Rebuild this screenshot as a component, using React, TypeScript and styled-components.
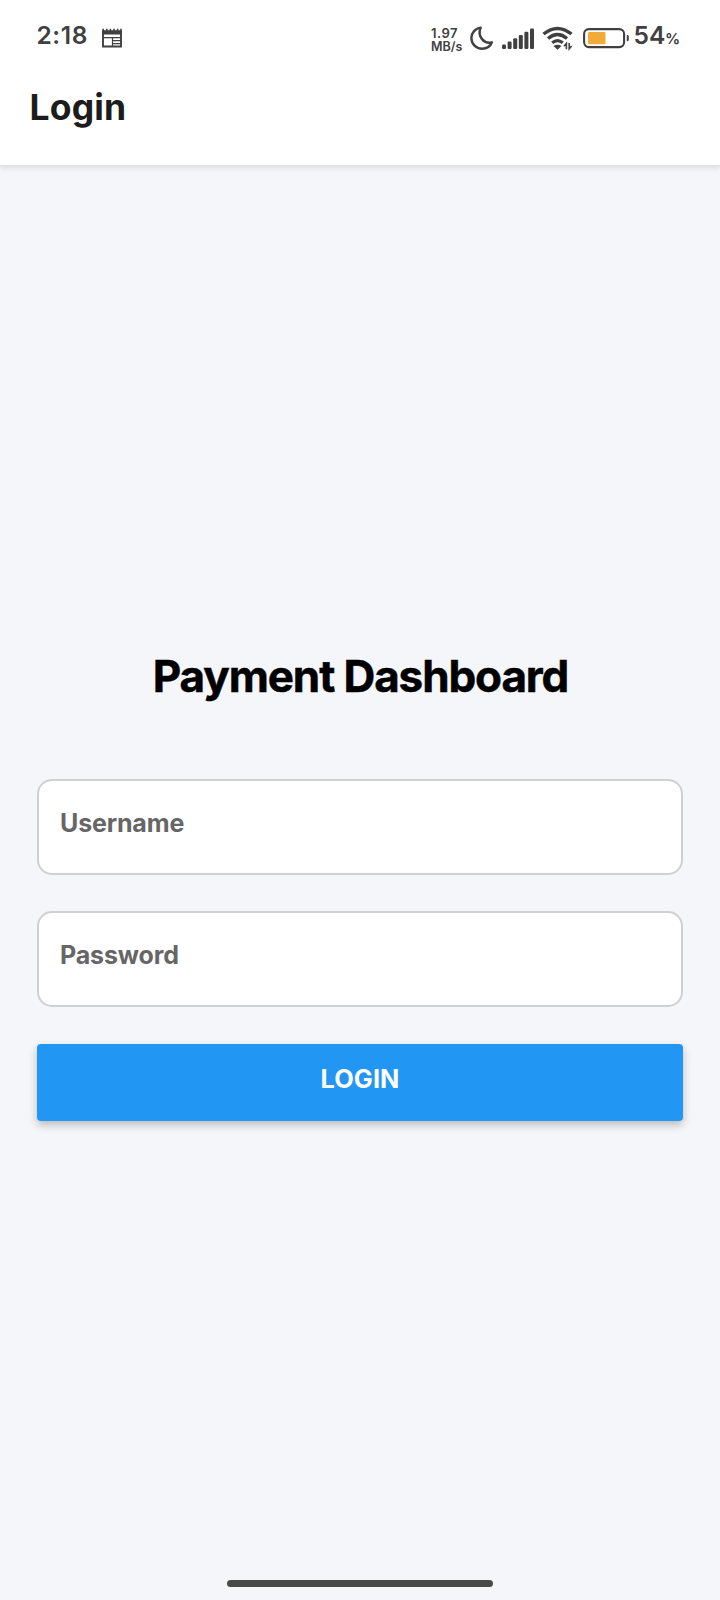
import React from "react";
import styled, { createGlobalStyle } from "styled-components";

const GlobalStyle = createGlobalStyle`
  *, *::before, *::after { box-sizing: border-box; }
  body { margin: 0; background: #f4f6fa; font-family: Inter, "Liberation Sans", sans-serif; }
`;

const Screen = styled.div`
  display: flex;
  flex-direction: column;
  width: 720px;
  height: 1600px;
  background: #f4f6fa;
`;

const Header = styled.header`
  height: 165px;
  background: #fff;
  box-shadow: 0 2px 0 #e2e3e4, 0 4px 4px rgba(0, 0, 0, 0.08);
`;

const StatusBar = styled.div`
  display: flex;
  justify-content: space-between;
  height: 72px;
  padding: 20px 40px 0 36.5px;
  color: #404040;
`;

const StatusGroup = styled.div`
  display: flex;
  align-items: flex-start;
`;

const StatusText = styled.span`
  font-size: 24.5px;
  line-height: 31px;
  font-weight: 600;
`;

const Time = styled(StatusText)`
  width: 65.5px;
  letter-spacing: 0.6px;
`;

const Speed = styled.div`
  display: flex;
  flex-direction: column;
  width: 37.5px;
  padding-top: 7px;
  font-size: 12.5px;
  line-height: 13px;
  font-weight: 600;
`;

const Rate = styled.span`
  font-size: 13px;
  letter-spacing: 0.5px;
`;

const Glyph = styled.svg<{ $gap?: number }>`
  display: block;
  flex: none;
  margin-right: ${({ $gap = 0 }) => $gap}px;
`;

const Percent = styled.span`
  font-size: 14.5px;
  line-height: 37px;
  font-weight: 700;
`;

const Title = styled.h1`
  margin: 0;
  padding: 14px 29.5px 0;
  font-size: 35.5px;
  line-height: 44px;
  font-weight: 700;
  letter-spacing: 0.15px;
  color: #1c1c1c;
`;

const Main = styled.main`
  flex: 1;
  display: flex;
  flex-direction: column;
  padding: 484px 37px 0;
`;

const Heading = styled.h2`
  margin: 0 0 76px;
  padding-left: 1px;
  font-size: 44px;
  line-height: 54px;
  font-weight: 700;
  letter-spacing: -1.1px;
  -webkit-text-stroke: 0.5px #000;
  text-align: center;
  color: #000;
`;

const Field = styled.input`
  width: 100%;
  height: 96px;
  margin: 0 0 36px;
  padding: 0 21px 9px;
  border: 2px solid #ced0d2;
  border-radius: 15px;
  background: #fff;
  font-family: inherit;
  font-size: 25px;
  font-weight: 700;
  letter-spacing: -0.15px;
  color: #222;
  outline: none;
  &::placeholder { color: #666; opacity: 1; }
`;

const Submit = styled.button`
  width: 100%;
  height: 77px;
  margin-top: 1px;
  padding: 0 0 9px;
  border: 0;
  border-radius: 4px;
  background: #2196f3;
  box-shadow: 0 4px 8px rgba(0, 0, 0, 0.24);
  color: #fff;
  font-family: inherit;
  font-size: 25.3px;
  font-weight: 700;
  letter-spacing: 0.1px;
`;

const HomeIndicator = styled.div`
  align-self: center;
  width: 266px;
  height: 7px;
  margin-bottom: 13px;
  border-radius: 4px;
  background: #484a49;
`;

const CalendarIcon = () => (
  <Glyph width="22" height="30" viewBox="0 0 22 30" fill="none" stroke="#404040">
    <path d="M1 11.5h18v15H1z" strokeWidth="1.9" />
    <path d="M.2 10.5h19.6v4H.2z" fill="#404040" stroke="none" />
    <path d="M1.2 8.8v3M4.8 8.8v3M8.4 8.8v3M12 8.8v3M15.6 8.8v3M19 8.8v3" strokeWidth="1.6" />
    <path d="M10.5 17.7v9M1 17.7H19M10.5 20.7H19M10.5 23.7H19" strokeWidth="1.2" />
  </Glyph>
);

const MoonIcon = () => (
  <Glyph width="26" height="32" viewBox="-1 0 26 32" $gap={7} fill="none" stroke="#404040">
    <path
      d="M10.7 7.6C5.3 8.4 1.4 12.7 1.4 18c0 6 4.8 10.7 10.7 10.7 4.5 0 8.3-2.5 9.8-6.4C14.3 24.4 6.9 16.6 10.7 7.6Z"
      strokeWidth="2.4"
      strokeLinejoin="round"
    />
  </Glyph>
);

const SignalIcon = () => (
  <Glyph width="32" height="32" viewBox="0 0 32 32" $gap={8} fill="#404040">
    <rect x="0" y="24.5" width="4" height="4.5" rx="1.2" />
    <rect x="5.6" y="21.5" width="4" height="7.5" rx="1.2" />
    <rect x="11.2" y="18.3" width="4" height="10.7" rx="1.2" />
    <rect x="16.8" y="15" width="4" height="14" rx="1.2" />
    <rect x="22.4" y="11.8" width="4" height="17.2" rx="1.2" />
    <rect x="28" y="8.5" width="4" height="20.5" rx="1.2" />
  </Glyph>
);

const WifiIcon = () => (
  <Glyph width="32" height="32" viewBox="0 0 32 32" $gap={9} fill="none" stroke="#404040">
    <path d="M1.5 14Q15.5 2.8 29.5 14" strokeWidth="3.4" />
    <path d="M6 18.5q9.5-7.9 19 0" strokeWidth="3.3" />
    <path d="M10.2 22.8q5.3-4.3 10.6 0" strokeWidth="3.2" />
    <path d="m11.5 26 4 3.8 4-3.8q-4-2.4-8 0Z" fill="#404040" stroke="none" />
    <path d="M24.4 29.2v-5.8l-2.4 2.8M27.2 23v5.8l2.4-2.8" strokeWidth="1.6" />
  </Glyph>
);

const BatteryIcon = () => (
  <Glyph width="47" height="32" viewBox="0 0 47 32" $gap={4}>
    <rect x="1.1" y="9.1" width="40" height="18" rx="4.8" fill="none" stroke="#404040" strokeWidth="2.1" />
    <rect x="5" y="12" width="17.5" height="12.3" rx="1" fill="#f2ab38" />
    <path d="M43.8 15h.7q1.3.2 1.3 1.5v3.2q0 1.3-1.3 1.5h-.7z" fill="#404040" />
  </Glyph>
);

export default function App() {
  return (
    <Screen>
      <GlobalStyle />
      <Header>
        <StatusBar>
          <StatusGroup>
            <Time>2:18</Time>
            <CalendarIcon />
          </StatusGroup>
          <StatusGroup>
            <Speed>
              <Rate>1.97</Rate>
              <span>MB/s</span>
            </Speed>
            <MoonIcon />
            <SignalIcon />
            <WifiIcon />
            <BatteryIcon />
            <StatusText>54</StatusText>
            <Percent>%</Percent>
          </StatusGroup>
        </StatusBar>
        <Title>Login</Title>
      </Header>
      <Main>
        <Heading>Payment Dashboard</Heading>
        <Field type="text" placeholder="Username" aria-label="Username" />
        <Field type="password" placeholder="Password" aria-label="Password" />
        <Submit type="button">LOGIN</Submit>
      </Main>
      <HomeIndicator />
    </Screen>
  );
}
